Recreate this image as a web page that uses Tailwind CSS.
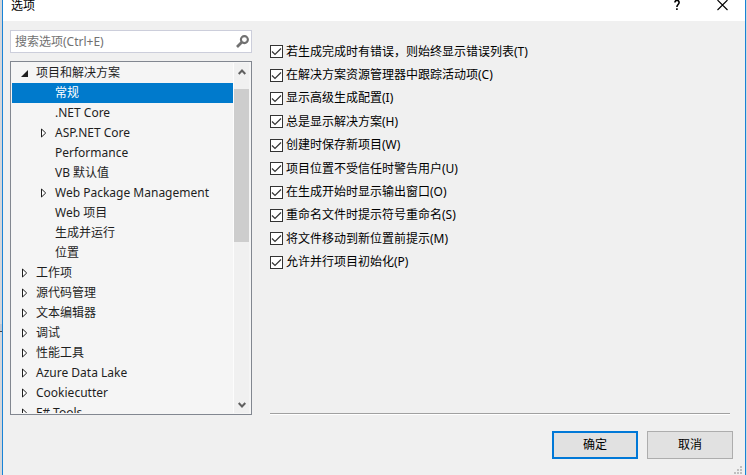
<!DOCTYPE html>
<html lang="zh-CN">
<head>
<meta charset="utf-8">
<title>选项</title>
<script src="https://cdn.jsdelivr.net/npm/@tailwindcss/browser@4"></script>
</head>
<body class="flex h-screen overflow-hidden bg-[#d4d6da] pr-px font-['Noto_Sans','Noto_Sans_CJK_SC',sans-serif] text-[12px] leading-5 text-black">
<svg class="hidden">
  <symbol id="closed" viewBox="0 0 6 10"><path d="M.5 1v8L4.7 5z" fill="#fff" stroke="#1e1e1e"/></symbol>
  <symbol id="open" viewBox="0 0 7 7"><path d="M7 0v7H0z" fill="#1e1e1e"/></symbol>
</svg>
<div class="flex w-[2px] shrink-0 flex-col pt-[324px]"><div class="h-[7px] bg-[#c3c7d0]"></div><div class="h-px bg-[#444]"></div></div>
<div class="flex min-w-0 flex-1 flex-col border-x border-[#1883d7] bg-[#f0f0f0]">
  <header class="flex h-[21px] shrink-0 items-start justify-between bg-white pl-2 pr-[17px]">
    <h1 class="-mt-1">选项</h1>
    <div class="flex gap-[35px]">
      <button aria-label="帮助" class="flex h-3 w-[10px] items-start justify-center"><svg class="h-[11px] w-[6px]" viewBox="0 0 6 11" fill="none" stroke="#000" stroke-width="1.6"><path d="M.9 2.500C.9 -.2 5.100 -.2 5.100 2.500 5.100 4.500 2.900 4.700 2.900 7M2.900 8.300v1.700"/></svg></button>
      <button aria-label="关闭" class="flex h-3 w-[11px] items-start"><svg class="h-[11px] w-[11px]" viewBox="0 0 11 11" fill="none" stroke="#000" stroke-width="1.1"><path d="M.5 0l10 10M10.500 0l-10 10"/></svg></button>
    </div>
  </header>
  <main class="flex min-h-0 flex-1 pl-[7px] pt-[9px]">
    <aside class="flex w-[242px] shrink-0 flex-col gap-2 pb-[60px]">
      <div class="flex h-[23px] shrink-0 items-center border border-[#cccedb] bg-white pl-1 pr-[2px]">
        <input type="text" aria-label="搜索选项" placeholder="搜索选项(Ctrl+E)" class="min-w-0 flex-1 bg-transparent outline-none placeholder:text-[#717171]">
        <button aria-label="搜索"><svg class="h-[13px] w-[13px]" viewBox="0 0 13 13" fill="none" stroke="#717171"><circle cx="8.400" cy="4.600" r="3.500" stroke-width="2.100"/><path d="M5.700 7.300L1 12" stroke-width="2.700"/></svg></button>
      </div>
      <div class="flex min-h-0 flex-1 border border-[#828790] bg-[#f5f5f5] p-px">
        <ul role="tree" aria-label="选项类别" class="min-w-0 flex-1 overflow-hidden text-[#1e1e1e]">
          <li role="treeitem" aria-expanded="true" class="flex h-5 items-center gap-2 pl-[9px]"><svg class="h-[7px] w-[7px]"><use href="#open"/></svg>项目和解决方案</li>
          <li role="treeitem" aria-selected="true" class="h-5 bg-[#007acc] pl-[43px] text-white">常规</li>
          <li role="treeitem" class="h-5 pl-[43px]">.NET Core</li>
          <li role="treeitem" aria-expanded="false" class="flex h-5 items-center gap-2 pl-[29px]"><svg class="h-[10px] w-[6px]"><use href="#closed"/></svg>ASP.NET Core</li>
          <li role="treeitem" class="h-5 pl-[43px]">Performance</li>
          <li role="treeitem" class="h-5 pl-[43px]">VB 默认值</li>
          <li role="treeitem" aria-expanded="false" class="flex h-5 items-center gap-2 pl-[29px]"><svg class="h-[10px] w-[6px]"><use href="#closed"/></svg>Web Package Management</li>
          <li role="treeitem" class="h-5 pl-[43px]">Web 项目</li>
          <li role="treeitem" class="h-5 pl-[43px]">生成并运行</li>
          <li role="treeitem" class="h-5 pl-[43px]">位置</li>
          <li role="treeitem" aria-expanded="false" class="flex h-5 items-center gap-2 pl-[10px]"><svg class="h-[10px] w-[6px]"><use href="#closed"/></svg>工作项</li>
          <li role="treeitem" aria-expanded="false" class="flex h-5 items-center gap-2 pl-[10px]"><svg class="h-[10px] w-[6px]"><use href="#closed"/></svg>源代码管理</li>
          <li role="treeitem" aria-expanded="false" class="flex h-5 items-center gap-2 pl-[10px]"><svg class="h-[10px] w-[6px]"><use href="#closed"/></svg>文本编辑器</li>
          <li role="treeitem" aria-expanded="false" class="flex h-5 items-center gap-2 pl-[10px]"><svg class="h-[10px] w-[6px]"><use href="#closed"/></svg>调试</li>
          <li role="treeitem" aria-expanded="false" class="flex h-5 items-center gap-2 pl-[10px]"><svg class="h-[10px] w-[6px]"><use href="#closed"/></svg>性能工具</li>
          <li role="treeitem" aria-expanded="false" class="flex h-5 items-center gap-2 pl-[10px]"><svg class="h-[10px] w-[6px]"><use href="#closed"/></svg>Azure Data Lake</li>
          <li role="treeitem" aria-expanded="false" class="flex h-5 items-center gap-2 pl-[10px]"><svg class="h-[10px] w-[6px]"><use href="#closed"/></svg>Cookiecutter</li>
          <li role="treeitem" aria-expanded="false" class="flex h-5 items-center gap-2 pl-[10px]"><svg class="h-[10px] w-[6px]"><use href="#closed"/></svg>F# Tools</li>
        </ul>
        <div class="flex w-[17px] shrink-0 flex-col items-stretch border-x border-l-[#fcfcfc] border-r-[#f5f5f5] bg-[#f0f0f0]">
          <button aria-label="向上滚动" class="flex h-[26px] items-start justify-center pt-[6px]"><svg class="h-[6px] w-2" viewBox="0 0 8 6" fill="none" stroke="#606060" stroke-width="2"><path d="M.7 5L4 1.500 7.300 5"/></svg></button>
          <div class="h-[153px] bg-[#cdcdcd]"></div>
          <button aria-label="向下滚动" class="mt-auto flex h-[17px] items-center justify-center"><svg class="h-[6px] w-2" viewBox="0 0 8 6" fill="none" stroke="#606060" stroke-width="2"><path d="M.7 1L4 4.500 7.300 1"/></svg></button>
        </div>
      </div>
    </aside>
    <section class="flex min-w-0 flex-1 flex-col pl-[18px] pt-[10px]">
      <div class="grid h-[234px] grid-rows-10 items-center justify-start">
        <label class="flex items-center gap-[3px]"><span class="grid"><input type="checkbox" checked class="peer col-start-1 row-start-1 h-[13px] w-[13px] appearance-none border border-[#333] bg-white"><svg class="pointer-events-none invisible col-start-1 row-start-1 h-[13px] w-[13px] peer-checked:visible" viewBox="0 0 13 13" fill="none" stroke="#333" stroke-width="1.200"><path d="M2 6.500L5 9.500 11 3.500"/></svg></span>若生成完成时有错误，则始终显示错误列表(T)</label>
        <label class="flex items-center gap-[3px]"><span class="grid"><input type="checkbox" checked class="peer col-start-1 row-start-1 h-[13px] w-[13px] appearance-none border border-[#333] bg-white"><svg class="pointer-events-none invisible col-start-1 row-start-1 h-[13px] w-[13px] peer-checked:visible" viewBox="0 0 13 13" fill="none" stroke="#333" stroke-width="1.200"><path d="M2 6.500L5 9.500 11 3.500"/></svg></span>在解决方案资源管理器中跟踪活动项(C)</label>
        <label class="flex items-center gap-[3px]"><span class="grid"><input type="checkbox" checked class="peer col-start-1 row-start-1 h-[13px] w-[13px] appearance-none border border-[#333] bg-white"><svg class="pointer-events-none invisible col-start-1 row-start-1 h-[13px] w-[13px] peer-checked:visible" viewBox="0 0 13 13" fill="none" stroke="#333" stroke-width="1.200"><path d="M2 6.500L5 9.500 11 3.500"/></svg></span>显示高级生成配置(I)</label>
        <label class="flex items-center gap-[3px]"><span class="grid"><input type="checkbox" checked class="peer col-start-1 row-start-1 h-[13px] w-[13px] appearance-none border border-[#333] bg-white"><svg class="pointer-events-none invisible col-start-1 row-start-1 h-[13px] w-[13px] peer-checked:visible" viewBox="0 0 13 13" fill="none" stroke="#333" stroke-width="1.200"><path d="M2 6.500L5 9.500 11 3.500"/></svg></span>总是显示解决方案(H)</label>
        <label class="flex items-center gap-[3px]"><span class="grid"><input type="checkbox" checked class="peer col-start-1 row-start-1 h-[13px] w-[13px] appearance-none border border-[#333] bg-white"><svg class="pointer-events-none invisible col-start-1 row-start-1 h-[13px] w-[13px] peer-checked:visible" viewBox="0 0 13 13" fill="none" stroke="#333" stroke-width="1.200"><path d="M2 6.500L5 9.500 11 3.500"/></svg></span>创建时保存新项目(W)</label>
        <label class="flex items-center gap-[3px]"><span class="grid"><input type="checkbox" checked class="peer col-start-1 row-start-1 h-[13px] w-[13px] appearance-none border border-[#333] bg-white"><svg class="pointer-events-none invisible col-start-1 row-start-1 h-[13px] w-[13px] peer-checked:visible" viewBox="0 0 13 13" fill="none" stroke="#333" stroke-width="1.200"><path d="M2 6.500L5 9.500 11 3.500"/></svg></span>项目位置不受信任时警告用户(U)</label>
        <label class="flex items-center gap-[3px]"><span class="grid"><input type="checkbox" checked class="peer col-start-1 row-start-1 h-[13px] w-[13px] appearance-none border border-[#333] bg-white"><svg class="pointer-events-none invisible col-start-1 row-start-1 h-[13px] w-[13px] peer-checked:visible" viewBox="0 0 13 13" fill="none" stroke="#333" stroke-width="1.200"><path d="M2 6.500L5 9.500 11 3.500"/></svg></span>在生成开始时显示输出窗口(O)</label>
        <label class="flex items-center gap-[3px]"><span class="grid"><input type="checkbox" checked class="peer col-start-1 row-start-1 h-[13px] w-[13px] appearance-none border border-[#333] bg-white"><svg class="pointer-events-none invisible col-start-1 row-start-1 h-[13px] w-[13px] peer-checked:visible" viewBox="0 0 13 13" fill="none" stroke="#333" stroke-width="1.200"><path d="M2 6.500L5 9.500 11 3.500"/></svg></span>重命名文件时提示符号重命名(S)</label>
        <label class="flex items-center gap-[3px]"><span class="grid"><input type="checkbox" checked class="peer col-start-1 row-start-1 h-[13px] w-[13px] appearance-none border border-[#333] bg-white"><svg class="pointer-events-none invisible col-start-1 row-start-1 h-[13px] w-[13px] peer-checked:visible" viewBox="0 0 13 13" fill="none" stroke="#333" stroke-width="1.200"><path d="M2 6.500L5 9.500 11 3.500"/></svg></span>将文件移动到新位置前提示(M)</label>
        <label class="flex items-center gap-[3px]"><span class="grid"><input type="checkbox" checked class="peer col-start-1 row-start-1 h-[13px] w-[13px] appearance-none border border-[#333] bg-white"><svg class="pointer-events-none invisible col-start-1 row-start-1 h-[13px] w-[13px] peer-checked:visible" viewBox="0 0 13 13" fill="none" stroke="#333" stroke-width="1.200"><path d="M2 6.500L5 9.500 11 3.500"/></svg></span>允许并行项目初始化(P)</label>
      </div>
      <div class="mt-auto mr-[15px] h-[2px] shrink-0 border-t border-[#a0a0a0] bg-white"></div>
      <footer class="flex shrink-0 justify-end gap-[9px] pr-3 pt-4">
        <button class="h-7 w-[86px] border-2 border-[#0078d7] bg-[#e1e1e1]">确定</button>
        <button class="h-7 w-[86px] border border-[#adadad] bg-[#e1e1e1]">取消</button>
      </footer>
      <div class="flex h-4 shrink-0 items-end justify-end pb-px pr-[3px]"><svg class="h-2 w-2" viewBox="0 0 8 8" fill="#bfbfbf"><path d="M6 0h2v2H6zM3 3h2v2H3zM6 3h2v2H6zM0 6h2v2H0zM3 6h2v2H3zM6 6h2v2H6z"/></svg></div>
    </section>
  </main>
</div>
</body>
</html>
